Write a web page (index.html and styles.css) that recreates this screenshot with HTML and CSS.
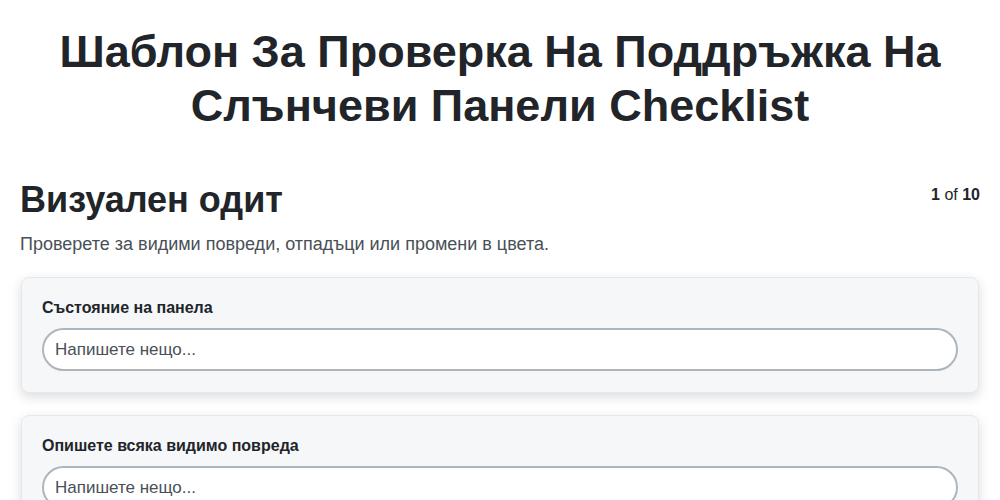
FILE: index.html
```html
<html>
<head>
 <meta charset="utf-8">
 <link rel="stylesheet" href="styles.css">
</head>
<body>
 <h1 class="title">Шаблон За Проверка На Поддръжка На Слънчеви Панели Checklist</h1>
 <div class="section-head">
  <h2 class="section-title">Визуален одит</h2>
  <div class="counter"><b>1</b> of <b>10</b></div>
 </div>
 <p class="section-desc">Проверете за видими повреди, отпадъци или промени в цвета.</p>
 <div class="card">
  <label class="field-label">Състояние на панела</label>
  <input class="field-input" placeholder="Напишете нещо...">
 </div>
 <div class="card">
  <label class="field-label">Опишете всяка видимо повреда</label>
  <input class="field-input" placeholder="Напишете нещо...">
 </div>
</body>
</html>
```
FILE: styles.css
```css
body {
 margin: 0;
 padding: 0 21px;
 font-family: "Liberation Sans", Arial, sans-serif;
 color: #212529;
 background: #fff;
}
.title {
 font-size: 45px;
 line-height: 54px;
 text-align: center;
 margin: 25px 20px 45px;
}
.section-head {
 display: flex;
 justify-content: space-between;
 align-items: flex-start;
}
.section-title {
 font-size: 36px;
 line-height: 44px;
 margin: 0 0 0 -1px;
}
.counter {
 font-size: 16px;
 margin: 8px -1px 0 0;
}
.section-desc {
 color: #495057;
 font-size: 18px;
 line-height: 22px;
 margin: 11px 0 22px -1px;
}
.card {
 background: #f6f7f9;
 border: 1px solid #e6e8ec;
 border-radius: 8px;
 box-shadow: 0 4px 12px rgba(0, 0, 0, 0.14);
 padding: 21px 20px 21px;
 margin-bottom: 22px;
}
.field-label {
 display: block;
 font-weight: 700;
 font-size: 16px;
 line-height: 18px;
 margin-bottom: 11px;
}
.field-input {
 display: block;
 box-sizing: border-box;
 width: 100%;
 height: 43px;
 border: 2px solid #adb5bd;
 border-radius: 22px;
 padding: 0 11px;
 font-family: "Liberation Sans", Arial, sans-serif;
 font-size: 17px;
 background: #fff;
}
.field-input::placeholder {
 color: #495057;
}
```
